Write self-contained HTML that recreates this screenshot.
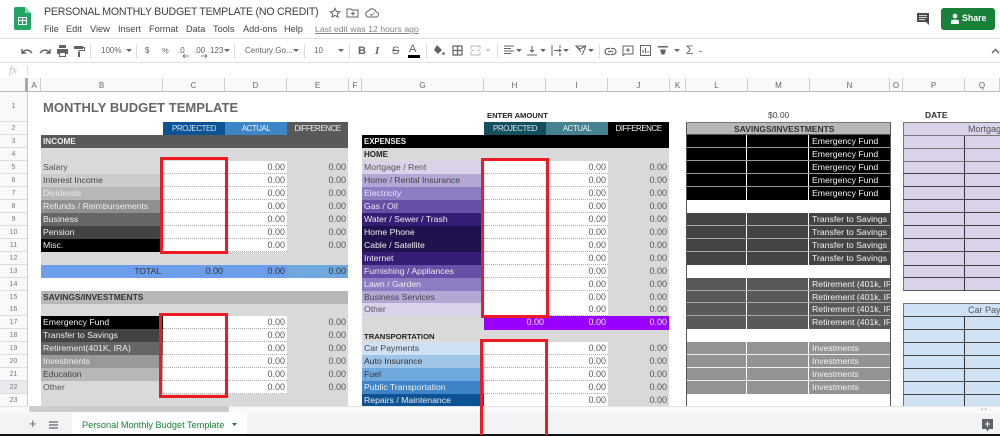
<!DOCTYPE html>
<html><head><meta charset="utf-8"><style>
html,body{margin:0;padding:0;background:#fff}
#p{position:relative;width:1000px;height:436px;overflow:hidden;background:#fff;font-family:"Liberation Sans",sans-serif;filter:blur(.35px)}
#p div,#p span.a,#p svg{position:absolute}
.t{white-space:nowrap}
.tb{font-size:8px;color:#5f6368;top:45px;line-height:12px;white-space:nowrap}
.m{font-size:9.2px;color:#444;top:23px;line-height:13px;white-space:nowrap}
.h{top:78px;height:14px;line-height:15px;font-size:8px;color:#666;text-align:center;border-right:1px solid #ccc;box-sizing:border-box;background:#f8f9fa;border-bottom:1px solid #bbb}
.rn{left:0;width:27px;height:13px;font-size:7px;line-height:13px;color:#777;text-align:center;background:#f8f9fa;border-bottom:1px solid #ddd;box-sizing:border-box}
.sep{width:1px;background:#ddd;top:44px;height:14px}
.c{height:13px;line-height:13px;font-size:8.7px;white-space:nowrap;overflow:hidden;box-sizing:border-box;padding-left:2px}
.n{height:13px;line-height:13px;font-size:9px;text-align:right;box-sizing:border-box;padding-right:2px;color:#555}
.w{height:13px;background:#fff;border-bottom:1px dotted #aaa;box-sizing:border-box}
.BF{left:41px;width:122px}
.C{left:163px;width:62px}.D{left:225px;width:62px}.E{left:287px;width:61px}
.G{left:362px;width:122px}.H{left:484px;width:62px}.I{left:546px;width:62px}.J{left:608px;width:61px}
.L{left:687px;width:59px;height:13px}.M{left:747px;width:61px;height:13px}.N{left:809px;width:81px;color:#f3f3f3;padding-left:3px}
.r2{top:122px}.r3{top:135px}.r4{top:148px}.r5{top:161px}.r6{top:174px}.r7{top:187px}.r8{top:200px}.r9{top:213px}.r10{top:226px}.r11{top:239px}.r12{top:252px}.r13{top:265px}.r14{top:278px}.r15{top:291px}.r16{top:303px}.r17{top:316px}.r18{top:329px}.r19{top:342px}.r20{top:355px}.r21{top:368px}.r22{top:381px}.r23{top:394px}
.hd{text-align:center;color:#eee;font-size:8px;letter-spacing:-.5px;line-height:13px;height:13px;padding:0}
.k{background:#000}.g4{background:#444}.g5{background:#595959}.g9{background:#939393}
.red{border:3px solid #ed1c24;box-sizing:border-box;background:transparent}
.pl{left:903px;width:97px;height:1px;background:#444}
</style></head><body><div id="p">

<!-- title bar -->
<svg style="left:14px;top:7px" width="17" height="23" viewBox="0 0 17 23"><path d="M2 0h9l6 6v15a2 2 0 0 1-2 2H2a2 2 0 0 1-2-2V2a2 2 0 0 1 2-2z" fill="#23a566"/><path d="M11 0l6 6h-6z" fill="#8ed1b1"/><path d="M4 10h9v8H4z" fill="#fff"/><path d="M5 11h3v2H5zM9 11h3v2H9zM5 14h3v3H5zM9 14h3v3H9z" fill="#23a566"/></svg>
<div class="t" style="left:44px;top:4px;font-size:10.6px;letter-spacing:-.22px;line-height:16px;color:#3c4043">PERSONAL MONTHLY BUDGET TEMPLATE (NO CREDIT)</div>
<svg style="left:329px;top:7px" width="12" height="12" viewBox="0 0 12 12"><path d="M6 1.300l1.400 3.200 3.400.3-2.600 2.200.8 3.300L6 8.300 3 10.100l.8-3.300L1.200 4.800l3.400-.3z" fill="none" stroke="#5f6368"/></svg>
<svg style="left:346px;top:8px" width="13" height="10" viewBox="0 0 13 10"><path d="M1 1h4l1 1h6v7H1z" fill="none" stroke="#5f6368"/><path d="M5 5.500h4M7 3.500v4" stroke="#5f6368"/></svg>
<svg style="left:365px;top:8px" width="14" height="10" viewBox="0 0 14 10"><path d="M4 9a3 3 0 0 1-.5-6A4 4 0 0 1 11 4a2.500 2.500 0 0 1 0 5z" fill="none" stroke="#5f6368"/><path d="M5 6l1.500 1.500L9 5" fill="none" stroke="#5f6368" stroke-width=".8"/></svg>
<div class="m" style="left:44px">File</div><div class="m" style="left:66px">Edit</div><div class="m" style="left:90px">View</div><div class="m" style="left:118px">Insert</div><div class="m" style="left:149px">Format</div><div class="m" style="left:186px">Data</div><div class="m" style="left:213px">Tools</div><div class="m" style="left:243px">Add-ons</div><div class="m" style="left:284px">Help</div>
<div class="m" style="left:315px;font-size:8.7px;color:#80868b;text-decoration:underline">Last edit was 12 hours ago</div>

<svg style="left:916px;top:12px" width="14" height="14" viewBox="0 0 14 14"><path d="M1 1h12v12l-3-3H1z" fill="#4a4d50"/><path d="M3 3.500h8M3 5.500h8M3 7.500h6" stroke="#fff" stroke-width=".8"/></svg>
<div style="left:941px;top:8px;width:54px;height:22px;background:#188038;border-radius:3px"></div>
<svg style="left:949px;top:13px" width="12" height="12" viewBox="0 0 12 12"><circle cx="6" cy="3" r="2.300" fill="#fff"/><path d="M2 11V7.500q4-2 8 0V11z" fill="#fff"/></svg>
<div class="t" style="left:962px;top:12px;font-size:8.8px;font-weight:bold;line-height:13px;color:#fff">Share</div>

<!-- toolbar -->
<div style="left:0;top:38px;width:1000px;height:1px;background:#e3e3e3"></div>
<div style="left:0;top:62px;width:1000px;height:1px;background:#e3e3e3"></div>
<svg style="left:20px;top:44px" width="14" height="14" viewBox="0 0 14 14"><path d="M2 5v4h4M2.500 8.500Q7 3.500 12 9" fill="none" stroke="#5f6368" stroke-width="1.400"/></svg>
<svg style="left:38px;top:44px" width="14" height="14" viewBox="0 0 14 14"><path d="M12 5v4H8M11.500 8.500Q7 3.500 2 9" fill="none" stroke="#5f6368" stroke-width="1.400"/></svg>
<svg style="left:56px;top:45px" width="13" height="12" viewBox="0 0 13 12"><path d="M3 0h7v3H3zM1 4h11v5h-2v3H3V9H1z" fill="#5f6368"/><path d="M4 8h5v3H4z" fill="#fff"/></svg>
<svg style="left:73px;top:45px" width="12" height="12" viewBox="0 0 12 12"><path d="M1 1h9v3H1z" fill="#5f6368"/><path d="M10 2.500h1.500v3H6v2" fill="none" stroke="#5f6368"/><path d="M5 7h2v5H5z" fill="#5f6368"/></svg>
<div class="sep" style="left:90px"></div>
<div class="tb" style="left:101px">100%</div><svg style="left:126px;top:49px" width="7" height="4"><path d="M0 0h6L3 3z" fill="#666"/></svg>
<div class="sep" style="left:136px"></div>
<div class="tb" style="left:145px">$</div><div class="tb" style="left:162px;font-size:7.500px">%</div>
<div class="tb" style="left:178px">.0</div><svg style="left:182px;top:54px" width="8" height="4"><path d="M1 2h6M1 2l2-2M1 2l2 2" stroke="#5f6368" fill="none" stroke-width=".8"/></svg>
<div class="tb" style="left:194px">.00</div><svg style="left:200px;top:54px" width="8" height="4"><path d="M1 2h6M7 2L5 0M7 2L5 4" stroke="#5f6368" fill="none" stroke-width=".8"/></svg>
<div class="tb" style="left:210px">123</div><svg style="left:224px;top:49px" width="7" height="4"><path d="M0 0h6L3 3z" fill="#666"/></svg>
<div class="sep" style="left:234px"></div>
<div class="tb" style="left:245px">Century Go...</div><svg style="left:293px;top:49px" width="7" height="4"><path d="M0 0h6L3 3z" fill="#666"/></svg>
<div class="sep" style="left:304px"></div>
<div class="tb" style="left:314px">10</div><svg style="left:338px;top:49px" width="7" height="4"><path d="M0 0h6L3 3z" fill="#666"/></svg>
<div class="sep" style="left:349px"></div>
<div class="t" style="left:358px;top:44px;font-size:11px;font-weight:bold;color:#5f6368;line-height:14px">B</div>
<div class="t" style="left:375px;top:44px;font-size:11px;font-style:italic;font-weight:bold;font-family:'Liberation Serif',serif;color:#5f6368;line-height:14px">I</div>
<div class="t" style="left:392px;top:44px;font-size:11px;color:#5f6368;line-height:14px;text-decoration:line-through">S</div>
<div class="t" style="left:409px;top:42px;font-size:11px;color:#5f6368;line-height:14px">A</div>
<div style="left:408px;top:55px;width:12px;height:3px;background:#000"></div>
<div class="sep" style="left:426px"></div>
<svg style="left:432px;top:44px" width="13" height="13" viewBox="0 0 13 13"><path d="M5 1l5 5-4 4-4-4z" fill="#5f6368"/><circle cx="11.500" cy="9.500" r="1.300" fill="#5f6368"/></svg>
<svg style="left:452px;top:45px" width="11" height="11" viewBox="0 0 11 11"><path d="M1 1h9v9H1zM5.500 1v9M1 5.500h9" fill="none" stroke="#5f6368" stroke-width="1.200"/></svg>
<svg style="left:470px;top:45px" width="11" height="11" viewBox="0 0 11 11"><path d="M1 4V1h9v3M1 7v3h9V7M1 5.500h3M7 5.500h3" fill="none" stroke="#c4c7ca" stroke-width="1.200"/></svg>
<svg style="left:485px;top:49px" width="7" height="4"><path d="M0 0h6L3 3z" fill="#ccc"/></svg>
<div class="sep" style="left:497px"></div>
<svg style="left:504px;top:45px" width="11" height="11" viewBox="0 0 11 11"><path d="M0 1h10M0 3.500h7M0 6h10M0 8.500h7" stroke="#5f6368" stroke-width="1.100"/></svg><svg style="left:516px;top:49px" width="7" height="4"><path d="M0 0h6L3 3z" fill="#666"/></svg>
<svg style="left:527px;top:45px" width="11" height="11" viewBox="0 0 11 11"><path d="M0 10h10M5 1v6M3 5l2 2 2-2" stroke="#5f6368" fill="none" stroke-width="1.100"/></svg><svg style="left:540px;top:49px" width="7" height="4"><path d="M0 0h6L3 3z" fill="#666"/></svg>
<svg style="left:551px;top:45px" width="11" height="11" viewBox="0 0 11 11"><path d="M1 0v11M9 0v3M9 8v3M3 5.500h7M8 4l2 1.500L8 7" stroke="#5f6368" fill="none"/></svg><svg style="left:563px;top:49px" width="7" height="4"><path d="M0 0h6L3 3z" fill="#666"/></svg>
<svg style="left:575px;top:45px" width="12" height="11" viewBox="0 0 12 11"><path d="M1 1h10L5 4zM11 1L7 10M1 1l5 6" stroke="#5f6368" fill="none"/></svg><svg style="left:588px;top:49px" width="7" height="4"><path d="M0 0h6L3 3z" fill="#666"/></svg>
<div class="sep" style="left:599px"></div>
<svg style="left:604px;top:47px" width="13" height="9" viewBox="0 0 13 9"><path d="M6 1.500H4a3 3 0 0 0 0 6h2M7 1.500h2a3 3 0 0 1 0 6H7M4 4.500h5" stroke="#5f6368" fill="none" stroke-width="1.200"/></svg>
<svg style="left:622px;top:45px" width="12" height="11" viewBox="0 0 12 11"><path d="M1 1h10v8H3L1 10.500zM6 3v4M4 5h4" stroke="#5f6368" fill="none"/></svg>
<svg style="left:640px;top:45px" width="11" height="11" viewBox="0 0 11 11"><path d="M.5.500h10v10H.5z" stroke="#5f6368" fill="none"/><path d="M3 5v3M5.500 3v5M8 6v2" stroke="#5f6368"/></svg>
<svg style="left:658px;top:46px" width="10" height="9" viewBox="0 0 10 9"><path d="M0 0h10v1.500H0zM2 3.500h6L6.500 8.500h-3z" fill="#5f6368"/></svg>
<svg style="left:674px;top:49px" width="7" height="4"><path d="M0 0h6L3 3z" fill="#666"/></svg>
<div class="t" style="left:686px;top:43px;font-size:12px;color:#5f6368;line-height:15px">Σ</div>
<div style="left:699px;top:51px;width:3px;height:1px;background:#888"></div>
<svg style="left:991px;top:48px" width="9" height="6" viewBox="0 0 9 6"><path d="M1 5l3.500-3.500L8 5" stroke="#5f6368" fill="none" stroke-width="1.400"/></svg>

<!-- fx -->
<div class="t" style="left:9px;top:63px;font-size:11px;font-style:italic;font-family:'Liberation Serif',serif;color:#c0c0c0;line-height:14px">fx</div>
<div style="left:27px;top:65px;width:1px;height:10px;background:#ddd"></div>

<!-- column headers -->
<div style="left:0;top:78px;width:1000px;height:1px;background:#ccc"></div>
<div class="h" style="left:0;width:28px;border-right:3px solid #aaa;top:78px"></div>
<div class="h" style="left:28px;width:13px">A</div><div class="h" style="left:41px;width:122px">B</div><div class="h" style="left:163px;width:62px">C</div><div class="h" style="left:225px;width:62px">D</div><div class="h" style="left:287px;width:62px">E</div><div class="h" style="left:349px;width:13px">F</div><div class="h" style="left:362px;width:122px">G</div><div class="h" style="left:484px;width:62px">H</div><div class="h" style="left:546px;width:62px">I</div><div class="h" style="left:608px;width:62px">J</div><div class="h" style="left:670px;width:16px">K</div><div class="h" style="left:686px;width:62px">L</div><div class="h" style="left:748px;width:62px">M</div><div class="h" style="left:810px;width:80px">N</div><div class="h" style="left:890px;width:13px">O</div><div class="h" style="left:903px;width:62px">P</div><div class="h" style="left:965px;width:35px">Q</div>

<!-- row headers -->
<div style="left:27px;top:92px;width:1px;height:314px;background:#ccc"></div>
<div class="rn" style="top:92px;height:30px;line-height:30px">1</div>
<div class="rn r2">2</div><div class="rn r3">3</div><div class="rn r4">4</div><div class="rn r5">5</div><div class="rn r6">6</div><div class="rn r7">7</div><div class="rn r8">8</div><div class="rn r9">9</div><div class="rn r10">10</div><div class="rn r11">11</div><div class="rn r12">12</div><div class="rn r13">13</div><div class="rn r14">14</div><div class="rn r15">15</div><div class="rn r16">16</div><div class="rn r17">17</div><div class="rn r18">18</div><div class="rn r19">19</div><div class="rn r20">20</div><div class="rn r21">21</div><div class="rn r22" style="background:#e8eaed">22</div><div class="rn r23">23</div>

<!-- income block -->
<div class="t" style="left:43px;top:99px;font-size:13px;font-weight:bold;letter-spacing:.05px;color:#666;line-height:17px">MONTHLY BUDGET TEMPLATE</div>
<div class="hd C r2" style="background:#0b5394;color:#cfe2f3">PROJECTED</div>
<div class="hd D r2" style="background:#3d85c6;color:#e6f0fa">ACTUAL</div>
<div class="hd E r2" style="background:#595959;color:#eee">DIFFERENCE</div>
<div style="left:41px;top:135px;width:307px;height:13px;background:#595959"></div>
<div class="c r3" style="left:41px;width:120px;color:#eee;font-weight:bold;font-size:8.2px">INCOME</div>
<div style="left:41px;top:148px;width:307px;height:117px;background:#d9d9d9"></div>
<div class="w C r5"></div><div class="w C r6"></div><div class="w C r7"></div><div class="w C r8"></div><div class="w C r9"></div><div class="w C r10"></div><div class="w C r11"></div>
<div class="n w D r5">0.00</div><div class="n w D r6">0.00</div><div class="n w D r7">0.00</div><div class="n w D r8">0.00</div><div class="n w D r9">0.00</div><div class="n w D r10">0.00</div><div class="n w D r11">0.00</div>
<div class="n E r5">0.00</div><div class="n E r6">0.00</div><div class="n E r7">0.00</div><div class="n E r8">0.00</div><div class="n E r9">0.00</div><div class="n E r10">0.00</div><div class="n E r11">0.00</div>
<div class="c BF r5" style="color:#555">Salary</div>
<div class="c BF r6" style="background:#cccccc;color:#444">Interest Income</div>
<div class="c BF r7" style="background:#b7b7b7;color:#e8e8e8">Dividends</div>
<div class="c BF r8" style="background:#8f8f8f;color:#eee">Refunds / Reimbursements</div>
<div class="c BF r9" style="background:#666;color:#eee">Business</div>
<div class="c BF r10" style="background:#434343;color:#eee">Pension</div>
<div class="c BF r11" style="background:#000;color:#eee">Misc.</div>
<div style="left:41px;top:265px;width:246px;height:13px;background:#6d9eeb"></div>
<div style="left:287px;top:265px;width:61px;height:13px;background:#6fa8dc"></div>
<div class="n r13" style="left:41px;width:120px;color:#333;font-size:8.5px;padding-right:0">TOTAL</div>
<div class="n C r13" style="color:#333">0.00</div><div class="n D r13" style="color:#333">0.00</div><div class="n E r13" style="color:#333">0.00</div>

<div style="left:41px;top:291px;width:307px;height:13px;background:#b7b7b7"></div>
<div class="c r15" style="left:41px;width:200px;color:#333;font-weight:bold;font-size:8.5px">SAVINGS/INVESTMENTS</div>
<div style="left:41px;top:304px;width:307px;height:102px;background:#d9d9d9"></div>
<div class="w C r17"></div><div class="w C r18"></div><div class="w C r19"></div><div class="w C r20"></div><div class="w C r21"></div><div class="w C r22"></div>
<div class="n w D r17">0.00</div><div class="n w D r18">0.00</div><div class="n w D r19">0.00</div><div class="n w D r20">0.00</div><div class="n w D r21">0.00</div><div class="n w D r22">0.00</div>
<div class="n E r17">0.00</div><div class="n E r18">0.00</div><div class="n E r19">0.00</div><div class="n E r20">0.00</div><div class="n E r21">0.00</div><div class="n E r22">0.00</div>
<div class="c BF r17" style="background:#000;color:#eee">Emergency Fund</div>
<div class="c BF r18" style="background:#434343;color:#eee">Transfer to Savings</div>
<div class="c BF r19" style="background:#666;color:#eee">Retirement(401K, IRA)</div>
<div class="c BF r20" style="background:#999;color:#eee">Investments</div>
<div class="c BF r21" style="background:#b7b7b7;color:#444">Education</div>
<div class="c BF r22" style="color:#555">Other</div>

<!-- expenses block -->
<div class="t" style="left:487px;top:110px;font-size:7.6px;font-weight:bold;color:#222;line-height:11px">ENTER AMOUNT</div>
<div class="hd H r2" style="background:#134f5c;color:#cfe2f3">PROJECTED</div>
<div class="hd I r2" style="background:#45818e;color:#e6f0f2">ACTUAL</div>
<div class="hd J r2" style="background:#000;color:#eee">DIFFERENCE</div>
<div style="left:362px;top:135px;width:307px;height:13px;background:#000"></div>
<div class="c r3" style="left:362px;width:120px;color:#eee;font-weight:bold;font-size:7.8px">EXPENSES</div>
<div style="left:362px;top:148px;width:307px;height:258px;background:#d9d9d9"></div>
<div class="c r4" style="left:362px;width:120px;color:#222;font-weight:bold;font-size:8px">HOME</div>
<div class="w H r5"></div><div class="w H r6"></div><div class="w H r7"></div><div class="w H r8"></div><div class="w H r9"></div><div class="w H r10"></div><div class="w H r11"></div><div class="w H r12"></div><div class="w H r13"></div><div class="w H r14"></div><div class="w H r15"></div><div class="w H r16"></div>
<div class="n w I r5">0.00</div><div class="n w I r6">0.00</div><div class="n w I r7">0.00</div><div class="n w I r8">0.00</div><div class="n w I r9">0.00</div><div class="n w I r10">0.00</div><div class="n w I r11">0.00</div><div class="n w I r12">0.00</div><div class="n w I r13">0.00</div><div class="n w I r14">0.00</div><div class="n w I r15">0.00</div><div class="n w I r16">0.00</div>
<div class="n J r5">0.00</div><div class="n J r6">0.00</div><div class="n J r7">0.00</div><div class="n J r8">0.00</div><div class="n J r9">0.00</div><div class="n J r10">0.00</div><div class="n J r11">0.00</div><div class="n J r12">0.00</div><div class="n J r13">0.00</div><div class="n J r14">0.00</div><div class="n J r15">0.00</div><div class="n J r16">0.00</div>
<div class="c G r5" style="background:#d9d2e9;color:#555">Mortgage / Rent</div>
<div class="c G r6" style="background:#b4a7d6;color:#444">Home / Rental Insurance</div>
<div class="c G r7" style="background:#8e7cc3;color:#e8e4f4">Electricity</div>
<div class="c G r8" style="background:#674ea7;color:#eee">Gas / Oil</div>
<div class="c G r9" style="background:#351c75;color:#eee">Water / Sewer / Trash</div>
<div class="c G r10" style="background:#20124d;color:#eee">Home Phone</div>
<div class="c G r11" style="background:#20124d;color:#eee">Cable / Satellite</div>
<div class="c G r12" style="background:#351c75;color:#eee">Internet</div>
<div class="c G r13" style="background:#674ea7;color:#eee">Furnishing / Appliances</div>
<div class="c G r14" style="background:#8e7cc3;color:#eee">Lawn / Garden</div>
<div class="c G r15" style="background:#b4a7d6;color:#444">Business Services</div>
<div class="c G r16" style="background:#d9d2e9;color:#555">Other</div>
<div style="left:484px;top:316px;width:185px;height:14px;background:#9900ff"></div>
<div class="n H r17" style="color:#eee;padding-right:0;width:60px">0.00</div><div class="n I r17" style="color:#eee">0.00</div><div class="n J r17" style="color:#eee">0.00</div>
<div class="c r18" style="left:362px;width:120px;color:#222;font-weight:bold;font-size:7.7px;top:330px">TRANSPORTATION</div>
<div class="w H r19"></div><div class="w H r20"></div><div class="w H r21"></div><div class="w H r22"></div><div class="w H r23"></div>
<div class="n w I r19">0.00</div><div class="n w I r20">0.00</div><div class="n w I r21">0.00</div><div class="n w I r22">0.00</div><div class="n w I r23">0.00</div>
<div class="n J r19">0.00</div><div class="n J r20">0.00</div><div class="n J r21">0.00</div><div class="n J r22">0.00</div><div class="n J r23">0.00</div>
<div class="c G r19" style="background:#cfe2f3;color:#444">Car Payments</div>
<div class="c G r20" style="background:#9fc5e8;color:#333">Auto Insurance</div>
<div class="c G r21" style="background:#6fa8dc;color:#333">Fuel</div>
<div class="c G r22" style="background:#3d85c6;color:#eee">Public Transportation</div>
<div class="c G r23" style="background:#0b5394;color:#eee">Repairs / Maintenance</div>

<!-- savings tracker -->
<div class="t" style="left:768px;top:110px;font-size:8.5px;color:#444;line-height:11px">$0.00</div>
<div style="left:686px;top:122px;width:205px;height:284px;box-sizing:border-box;border-left:1px solid #555;border-right:1px solid #555;border-top:1px solid #777"></div>
<div style="left:687px;top:123px;width:203px;height:12px;background:#b7b7b7;border-bottom:1px solid #555;box-sizing:border-box;text-align:left;padding-left:47px;font-size:8.5px;font-weight:bold;color:#333;line-height:12px">SAVINGS/INVESTMENTS</div>

<div class="L r3 k"></div><div class="M r3 k"></div><div class="c N r3 k">Emergency Fund</div>
<div class="L r4 k"></div><div class="M r4 k"></div><div class="c N r4 k">Emergency Fund</div>
<div class="L r5 k"></div><div class="M r5 k"></div><div class="c N r5 k">Emergency Fund</div>
<div class="L r6 k"></div><div class="M r6 k"></div><div class="c N r6 k">Emergency Fund</div>
<div class="L r7 k"></div><div class="M r7 k"></div><div class="c N r7 k">Emergency Fund</div>
<div class="L r9 g4"></div><div class="M r9 g4"></div><div class="c N r9 g4">Transfer to Savings</div>
<div class="L r10 g4"></div><div class="M r10 g4"></div><div class="c N r10 g4">Transfer to Savings</div>
<div class="L r11 g4"></div><div class="M r11 g4"></div><div class="c N r11 g4">Transfer to Savings</div>
<div class="L r12 g4"></div><div class="M r12 g4"></div><div class="c N r12 g4">Transfer to Savings</div>
<div class="L r14 g5"></div><div class="M r14 g5"></div><div class="c N r14 g5">Retirement (401k, IRA)</div>
<div class="L r15 g5"></div><div class="M r15 g5"></div><div class="c N r15 g5">Retirement (401k, IRA)</div>
<div class="L r16 g5"></div><div class="M r16 g5"></div><div class="c N r16 g5">Retirement (401k, IRA)</div>
<div class="L r17 g5"></div><div class="M r17 g5"></div><div class="c N r17 g5">Retirement (401k, IRA)</div>
<div class="L r19 g9"></div><div class="M r19 g9"></div><div class="c N r19 g9">Investments</div>
<div class="L r20 g9"></div><div class="M r20 g9"></div><div class="c N r20 g9">Investments</div>
<div class="L r21 g9"></div><div class="M r21 g9"></div><div class="c N r21 g9">Investments</div>
<div class="L r22 g9"></div><div class="M r22 g9"></div><div class="c N r22 g9">Investments</div>
<div style="left:687px;top:147px;width:203px;height:1px;background:#999"></div><div style="left:687px;top:160px;width:203px;height:1px;background:#999"></div><div style="left:687px;top:173px;width:203px;height:1px;background:#999"></div><div style="left:687px;top:186px;width:203px;height:1px;background:#999"></div>
<div style="left:687px;top:225px;width:203px;height:1px;background:#aaa"></div><div style="left:687px;top:238px;width:203px;height:1px;background:#aaa"></div><div style="left:687px;top:251px;width:203px;height:1px;background:#aaa"></div>
<div style="left:687px;top:290px;width:203px;height:1px;background:#aaa"></div><div style="left:687px;top:302px;width:203px;height:1px;background:#aaa"></div><div style="left:687px;top:315px;width:203px;height:1px;background:#aaa"></div>
<div style="left:687px;top:354px;width:203px;height:1px;background:#eee"></div><div style="left:687px;top:367px;width:203px;height:1px;background:#eee"></div><div style="left:687px;top:380px;width:203px;height:1px;background:#eee"></div>

<!-- date trackers -->
<div class="t" style="left:925px;top:110px;font-size:8.5px;font-weight:bold;color:#333;line-height:11px">DATE</div>
<div style="left:903px;top:122px;width:97px;height:169px;background:#d9d2e9;box-sizing:border-box;border-left:1px solid #777;border-top:1px solid #777;border-bottom:1px solid #555"></div>
<div class="t" style="left:968px;top:123px;font-size:9px;color:#555;line-height:12px">Mortgage</div>
<div style="left:964px;top:135px;width:1px;height:156px;background:#333"></div>
<div class="pl" style="top:135px;background:#777"></div><div class="pl" style="top:148px;background:#777"></div><div class="pl" style="top:161px;background:#777"></div><div class="pl" style="top:173px"></div><div class="pl" style="top:186px"></div><div class="pl" style="top:199px"></div><div class="pl" style="top:212px"></div><div class="pl" style="top:225px"></div><div class="pl" style="top:238px"></div><div class="pl" style="top:251px"></div><div class="pl" style="top:265px"></div><div class="pl" style="top:277px"></div>

<div style="left:903px;top:303px;width:97px;height:103px;background:#cfe2f3;box-sizing:border-box;border-left:1px solid #777;border-top:1px solid #777"></div>
<div class="t" style="left:968px;top:304px;font-size:9px;color:#555;line-height:12px">Car Payments</div>
<div style="left:964px;top:316px;width:1px;height:90px;background:#333"></div>
<div class="pl" style="top:316px"></div><div class="pl" style="top:329px"></div><div class="pl" style="top:342px"></div><div class="pl" style="top:355px"></div><div class="pl" style="top:368px"></div><div class="pl" style="top:381px"></div><div class="pl" style="top:394px"></div>

<!-- bottom bar -->
<div style="left:0;top:406px;width:1000px;height:8px;background:#f8f9fa;border-top:1px solid #e3e3e3;box-sizing:border-box"></div>
<div style="left:29px;top:406px;width:200px;height:6px;background:#ccc;border-radius:2px"></div>
<div style="left:0;top:413px;width:1000px;height:21px;background:#f1f3f4"></div>
<div class="t" style="left:29px;top:416px;font-size:13px;color:#5f6368;line-height:15px">+</div>
<svg style="left:49px;top:421px" width="9" height="8" viewBox="0 0 9 8"><path d="M0 1h9M0 4h9M0 7h9" stroke="#5f6368" stroke-width="1.300"/></svg>
<div style="left:72px;top:413px;width:175px;height:21px;background:#fff"></div>
<div class="t" style="left:82px;top:419px;font-size:9.2px;color:#188038;line-height:12px">Personal Monthly Budget Template</div>
<svg style="left:232px;top:423px" width="6" height="4"><path d="M0 0h5L2.500 3z" fill="#188038"/></svg>
<div class="t" style="left:981px;top:407px;font-size:6px;color:#888;line-height:6px">‹ ›</div>
<svg style="left:982px;top:419px" width="11" height="13" viewBox="0 0 11 13"><path d="M0 0h11v10H7l-1.500 2.500L4 10H0z" fill="#5f6368"/><path d="M5.500 2.500v5M3 5h5" stroke="#fff"/></svg>
<div style="left:0;top:434px;width:1000px;height:2px;background:#111"></div>

<!-- red boxes -->
<div class="red" style="left:160px;top:157px;width:68px;height:97px"></div>
<div class="red" style="left:159px;top:313px;width:69px;height:85px"></div>
<div class="red" style="left:481px;top:158px;width:68px;height:160px"></div>
<div class="red" style="left:480px;top:339px;width:68px;height:96px;border-bottom:0"></div>
</div></body></html>
